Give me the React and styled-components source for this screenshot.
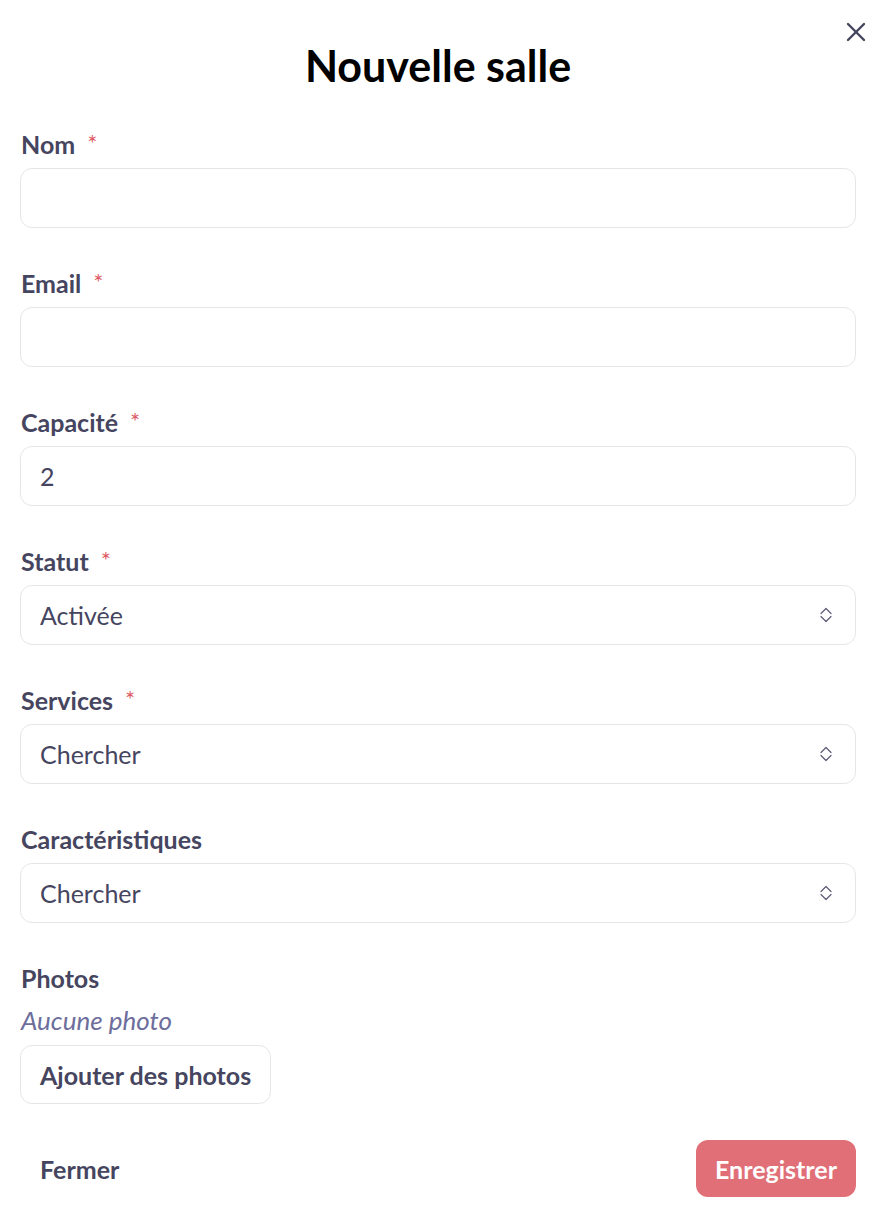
import React from 'react'
import styled, { createGlobalStyle } from 'styled-components'

const GlobalStyle = createGlobalStyle`
    body {
        margin: 0;
        background: #FFFFFF;
        font-family: Lato, "Open Sans", "Liberation Sans", sans-serif;
        color: #464560;
    }
    * {
        box-sizing: border-box;
    }
`

const fields = [
    { label: "Nom", required: true, type: "input", value: "" },
    { label: "Email", required: true, type: "input", value: "" },
    { label: "Capacité", required: true, type: "input", value: "2" },
    { label: "Statut", required: true, type: "select", value: "Activée" },
    { label: "Services", required: true, type: "select", value: "Chercher" },
    { label: "Caractéristiques", required: false, type: "select", value: "Chercher" },
]

// petite icône haut/bas des listes déroulantes
function Chevrons() {
    return (
        <svg width="14" height="18" viewBox="0 0 14 18" fill="none" stroke="#5C5B75" strokeWidth="1.2" strokeLinecap="round" strokeLinejoin="round">
            <path d="M2 7.5 L7 2.5 L12 7.5" />
            <path d="M2 10.5 L7 15.5 L12 10.5" />
        </svg>
    )
}

function App() {
    return (
        <>
            <GlobalStyle />
            <StModal>
                <StClose aria-label="Fermer">
                    <svg width="20" height="20" viewBox="0 0 20 20" fill="none" stroke="#464560" strokeWidth="2.4" strokeLinecap="round">
                        <path d="M2 2 L18 18" />
                        <path d="M18 2 L2 18" />
                    </svg>
                </StClose>
                <StTitle>Nouvelle salle</StTitle>

                <StForm>
                    {fields.map((f) => (
                        <StField key={f.label}>
                            <StLabel>
                                {f.label}
                                {f.required && <StRequired>*</StRequired>}
                            </StLabel>
                            {f.type === "input" ? (
                                <StInput defaultValue={f.value} spellCheck="false" />
                            ) : (
                                <StSelect>
                                    <span>{f.value}</span>
                                    <Chevrons />
                                </StSelect>
                            )}
                        </StField>
                    ))}

                    <StPhotos>
                        <StLabel>Photos</StLabel>
                        <StEmpty>Aucune photo</StEmpty>
                        <StButton $outlined>Ajouter des photos</StButton>
                    </StPhotos>
                </StForm>

                <StFooter>
                    <StButton>Fermer</StButton>
                    <StButton $primary>Enregistrer</StButton>
                </StFooter>
            </StModal>
        </>
    )
}

export default App

const StModal = styled.div`
    position: relative;
    width: 882px;
    min-height: 1210px;
    padding: 42px 26px 13px 20px;
`

const StClose = styled.button`
    position: absolute;
    top: 22px;
    right: 16px;
    padding: 0;
    border: none;
    background: none;
    display: flex;
    cursor: pointer;
`

const StTitle = styled.h1`
    margin: 0 0 40px;
    font-size: 43px;
    line-height: 48px;
    font-weight: 700;
    color: #000000;
    text-align: center;
`

const StForm = styled.div`
    display: flex;
    flex-direction: column;
    gap: 41px;
`

const StField = styled.div`
    display: flex;
    flex-direction: column;
    gap: 10px;
`

const StLabel = styled.label`
    display: flex;
    align-items: flex-start;
    padding-left: 1px;
    font-size: 25px;
    line-height: 28px;
    font-weight: 700;
    color: #464560;
`

const StRequired = styled.span`
    margin-left: 12px;
    font-size: 24px;
    line-height: 26px;
    font-weight: 400;
    color: #DE5B66;
`

const StInput = styled.input`
    width: 100%;
    height: 60px;
    padding: 0 19px;
    border: 1px solid #E6E6EA;
    border-radius: 12px;
    font-family: inherit;
    font-size: 25px;
    color: #464560;
    outline: none;
    background: #FFFFFF;
`

const StSelect = styled.div`
    display: flex;
    align-items: center;
    justify-content: space-between;
    height: 60px;
    padding: 0 22px 0 19px;
    border: 1px solid #E6E6EA;
    border-radius: 12px;
    font-size: 25px;
    color: #464560;
    cursor: pointer;
`

const StPhotos = styled.div`
    display: flex;
    flex-direction: column;
    align-items: flex-start;
`

const StEmpty = styled.p`
    margin: 14px 0 11px 1px;
    font-size: 26px;
    line-height: 28px;
    font-style: italic;
    color: #6D6E9C;
`

const StButton = styled.button`
    height: ${({ $primary }) => $primary ? "57px" : "59px"};
    padding: 0 ${({ $primary }) => $primary ? "18px" : "19px"};
    border: 1px solid ${({ $outlined }) => $outlined ? "#E6E6EA" : "transparent"};
    border-radius: 12px;
    background: ${({ $primary }) => $primary ? "#E06F78" : "#FFFFFF"};
    color: ${({ $primary }) => $primary ? "#FFFFFF" : "#464560"};
    font-family: inherit;
    font-size: 25px;
    font-weight: 700;
    cursor: pointer;
`

const StFooter = styled.div`
    display: flex;
    justify-content: space-between;
    align-items: center;
    margin-top: 35px;
`
